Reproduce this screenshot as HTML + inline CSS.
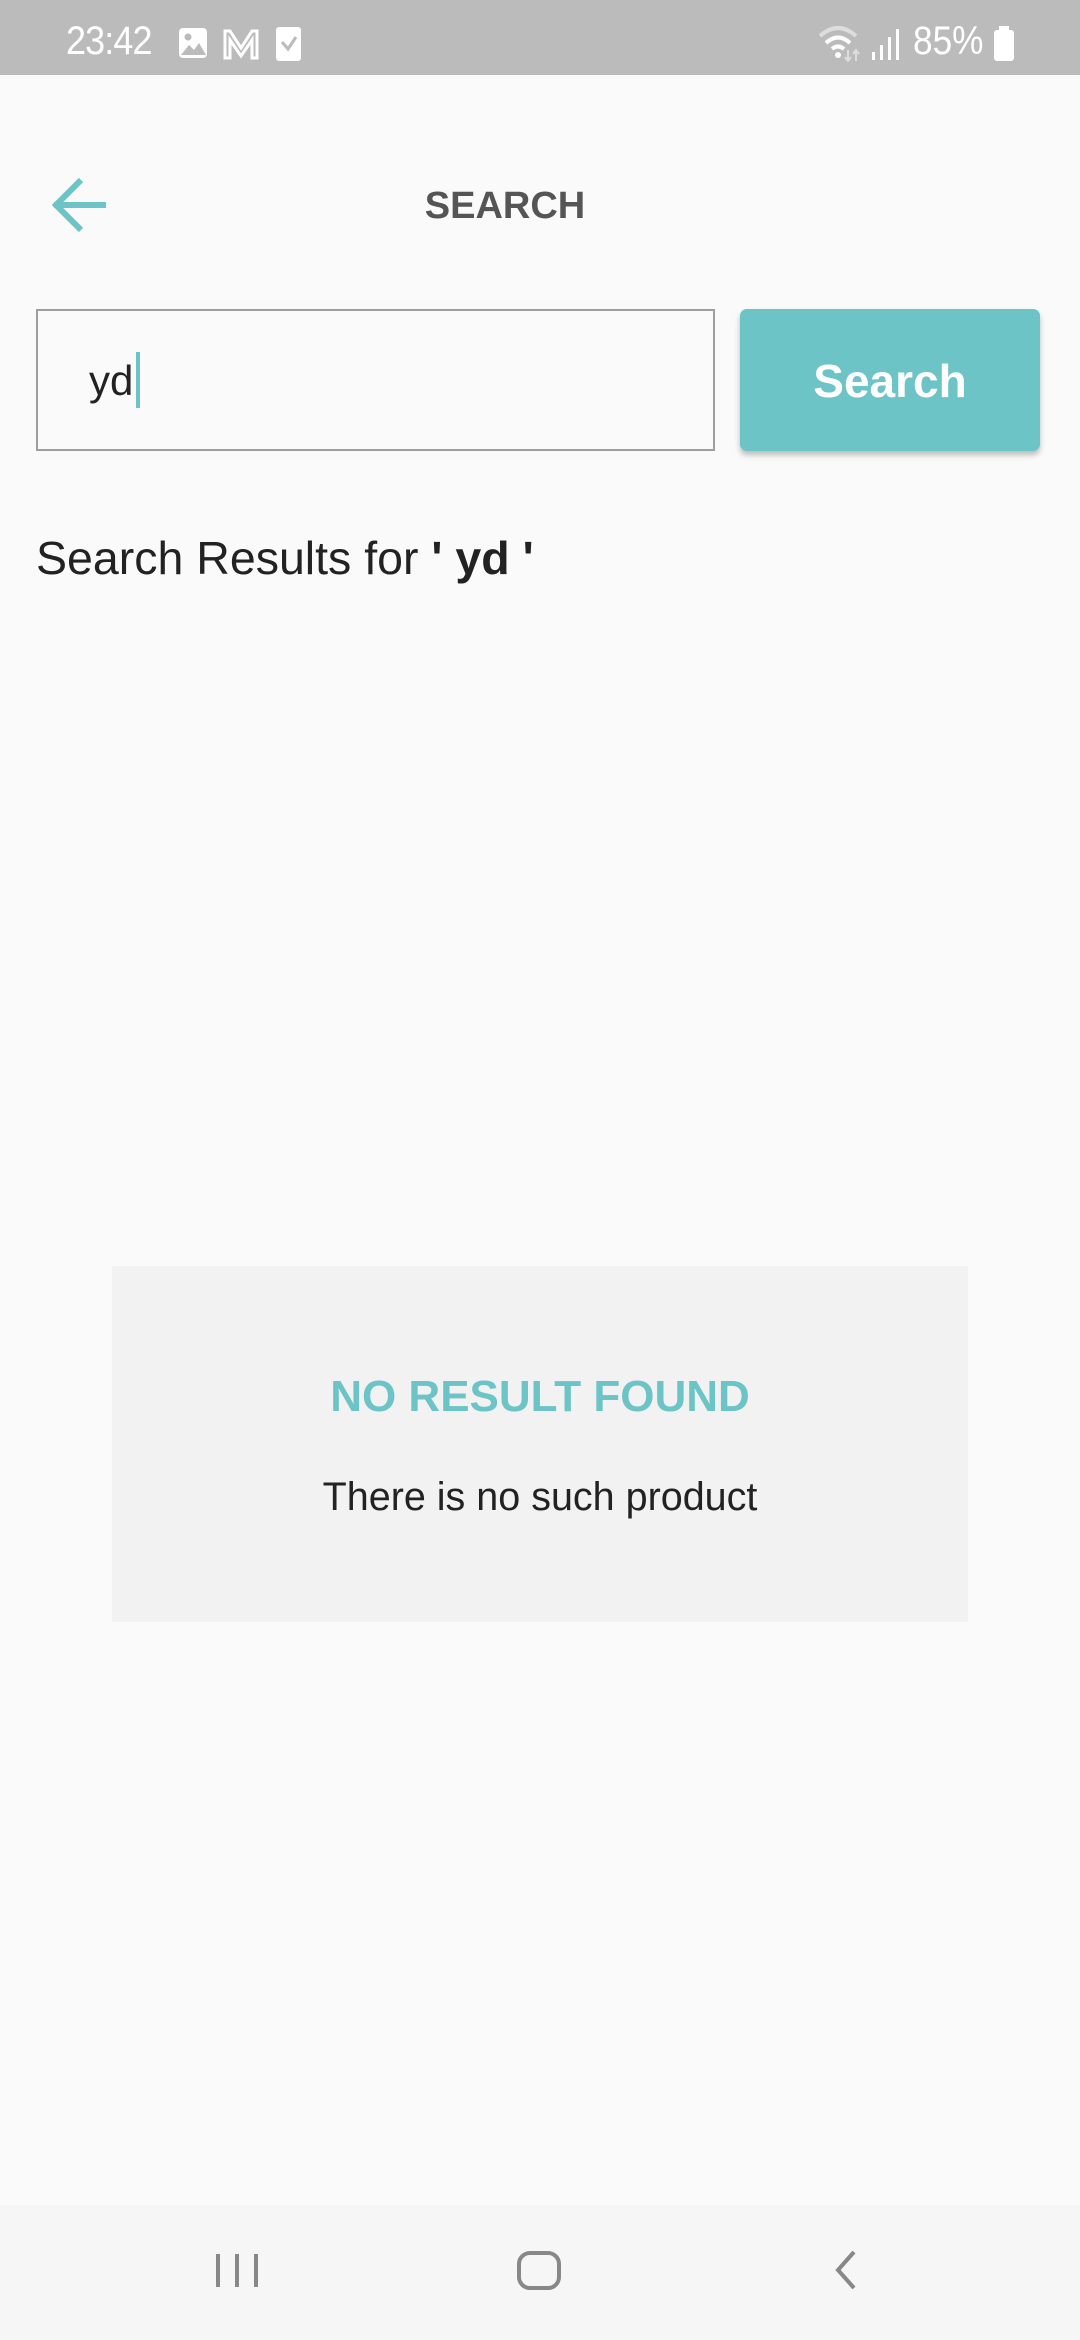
<!DOCTYPE html>
<html><head><meta charset="utf-8"><style>
*{margin:0;padding:0;box-sizing:border-box}
body{width:1080px;height:2340px;background:#fafafa;font-family:"Liberation Sans",Roboto,sans-serif;position:relative;overflow:hidden}
.abs{position:absolute}
#sb{left:0;top:0;width:1080px;height:75px;background:#bbbbbb;color:#fff}
</style></head><body>
<div id="sb" class="abs">
 <div class="abs" style="left:66px;top:19px;font-size:40px;letter-spacing:-1px;transform:scaleX(0.9);transform-origin:left">23:42</div>
 <svg class="abs" style="left:178px;top:27px" width="32" height="34" viewBox="0 0 32 34"><rect x="1" y="1" width="28" height="30" rx="4" fill="#fff"/><circle cx="10" cy="10" r="3.5" fill="#bbb"/><path d="M3 28 L11 18 L16 23 L21 16 L28 28Z" fill="#bbb"/></svg>
 <svg class="abs" style="left:222px;top:28px" width="40" height="32" viewBox="0 0 40 32"><path d="M3 30 V3 H8 L19 20 L30 3 H35 V30 H30 V12 L19 28 L8 12 V30Z" fill="none" stroke="#fff" stroke-width="3"/></svg>
 <svg class="abs" style="left:275px;top:26px" width="28" height="36" viewBox="0 0 28 36"><rect x="1" y="1" width="25" height="34" rx="3" fill="#fff"/><path d="M7 16 L13 23 L21 11" fill="none" stroke="#bbb" stroke-width="3"/></svg>
 <svg class="abs" style="left:818px;top:24px" width="44" height="38" viewBox="0 0 44 38"><path d="M2 12 Q20 -4 38 12" fill="none" stroke="#ddd" stroke-width="4"/><path d="M8 19 Q20 8 32 19" fill="none" stroke="#fff" stroke-width="4"/><path d="M14 25 Q20 20 26 25" fill="none" stroke="#fff" stroke-width="4"/><circle cx="20" cy="31" r="3" fill="#fff"/><path d="M30 26 V37 M27 33 L30 37 L33 33 M38 37 V26 M35 30 L38 26 L41 30" stroke="#ddd" stroke-width="2" fill="none"/></svg>
 <svg class="abs" style="left:870px;top:28px" width="30" height="32" viewBox="0 0 30 32"><rect x="2" y="24" width="3" height="8" fill="#fff"/><rect x="10" y="17" width="3" height="15" fill="#fff"/><rect x="18" y="9" width="3" height="23" fill="#fff"/><rect x="26" y="1" width="3" height="31" fill="#fff"/></svg>
 <div class="abs" style="left:913px;top:19px;font-size:40px;transform:scaleX(0.88);transform-origin:left">85%</div>
 <svg class="abs" style="left:993px;top:26px" width="22" height="36" viewBox="0 0 22 36"><rect x="6" y="0" width="10" height="5" fill="#fff"/><rect x="1" y="4" width="20" height="31" rx="3" fill="#fff"/></svg>
</div>

<svg class="abs" style="left:40px;top:170px" width="80" height="70" viewBox="40 170 80 70"><path d="M81 180 L56 205 L81 230 M54 205 H106" fill="none" stroke="#6cc4c6" stroke-width="6"/></svg>
<div class="abs" style="left:0;width:1010px;top:185px;text-align:center;font-size:38px;font-weight:bold;color:#555">SEARCH</div>

<div class="abs" style="left:36px;top:309px;width:679px;height:142px;border:2px solid #9e9e9e;background:#fafafa"></div>
<div class="abs" style="left:89px;top:357px;font-size:42px;color:#222">yd</div>
<div class="abs" style="left:136px;top:352px;width:4px;height:56px;background:#6cc4c6"></div>
<div class="abs" style="left:740px;top:309px;width:300px;height:142px;background:#6cc4c6;border-radius:7px;box-shadow:0 4px 6px rgba(0,0,0,0.25);color:#fff;font-weight:bold;font-size:46px;text-align:center;line-height:144px">Search</div>

<div class="abs" style="left:36px;top:531px;font-size:46.5px;color:#222">Search Results for <b>' yd '</b></div>

<div class="abs" style="left:112px;top:1266px;width:856px;height:356px;background:#f2f2f2"></div>
<div class="abs" style="left:112px;width:856px;top:1372px;text-align:center;font-size:44px;font-weight:bold;color:#6cc4c6">NO RESULT FOUND</div>
<div class="abs" style="left:112px;width:856px;top:1475px;text-align:center;font-size:39.5px;color:#222">There is no such product</div>

<div class="abs" style="left:0;top:2205px;width:1080px;height:135px;background:#f6f6f6"></div>
<svg class="abs" style="left:0;top:2205px" width="1080" height="135" viewBox="0 2205 1080 135"><path d="M218 2254 V2287 M237 2254 V2287 M256 2254 V2287" stroke="#888" stroke-width="4"/><rect x="519" y="2253" width="40" height="35" rx="11" fill="none" stroke="#888" stroke-width="4"/><path d="M854 2252 L838 2270 L854 2288" fill="none" stroke="#888" stroke-width="4"/></svg>
</body></html>
